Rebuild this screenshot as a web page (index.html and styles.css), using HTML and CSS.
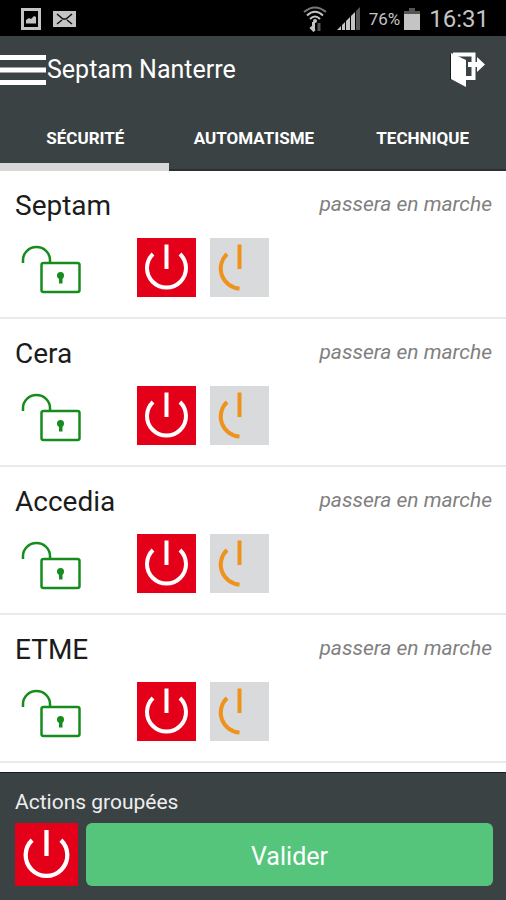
FILE: index.html
```html
<!DOCTYPE html>
<html lang="fr">
<head>
<meta charset="utf-8">
<meta name="viewport" content="width=device-width, initial-scale=1">
<title>Septam Nanterre</title>
<link rel="stylesheet" href="styles.css">
</head>
<body>
<svg class="sprite" aria-hidden="true">
  <symbol id="unlock" viewBox="0 0 60 50">
    <path d="M2 18V15A13.500 13 0 0 1 29 15V17" fill="none" stroke="currentColor" stroke-width="2.500"/>
    <rect x="20.500" y="18" width="38" height="29" rx="2" fill="none" stroke="currentColor" stroke-width="2.500"/>
    <circle cx="39.500" cy="30.500" r="3.500" fill="currentColor"/>
    <path d="M38 31h3.500v7.500H38z" fill="currentColor"/>
  </symbol>
  <symbol id="power" viewBox="0 0 59 59">
    <path d="M29.500 6.500V31M16 16A19.500 19.500 0 1 0 43 16" fill="none" stroke="currentColor" stroke-width="4"/>
  </symbol>
  <symbol id="half-power" viewBox="0 0 59 59">
    <path d="M29.500 6.500V31M17 16A20 20 0 0 0 29.500 50.500" fill="none" stroke="currentColor" stroke-width="4"/>
  </symbol>
</svg>
<div class="app">
  <div class="status">
    <svg width="20" height="22" viewBox="0 0 20 22" aria-hidden="true">
      <rect x="1.500" y="1.500" width="17" height="19" fill="none" stroke="#c4c4c4" stroke-width="3"/>
      <path d="M5 15.500V12l3-2 2 1 3-3 2 1v6.500z" fill="#c4c4c4"/>
    </svg>
    <svg width="23" height="22" viewBox="0 0 23 22" aria-hidden="true">
      <path d="M0 3h23v16H0z" fill="#c4c4c4"/>
      <path d="M4 6l6 5h3l6-5M4 16l5-4M19 16l-5-4" fill="none" stroke="#111" stroke-width="1.500"/>
    </svg>
    <div class="system">
      <svg width="24" height="26" viewBox="0 0 24 26" fill="none" stroke="#c4c4c4" stroke-width="2" aria-hidden="true">
        <path d="M1 6Q12-3 23 6" stroke="#777"/>
        <path d="M4 9.500Q12 2 20 9.500M7 13Q12 8 17 13"/>
        <circle cx="12" cy="15" r="2" fill="#c4c4c4" stroke="none"/>
        <path d="M10.500 16v8M7.500 21l3 3 1-1" stroke-width="3"/>
        <path d="M16 25v-8" stroke="#555" stroke-width="3"/>
      </svg>
      <svg width="24" height="24" viewBox="0 0 24 24" aria-hidden="true">
        <path d="M0 23l4-4v4zM5 18l3-3v8H5zM9 14l4-4v13H9zM14 9l4-4v18h-4z" fill="#c4c4c4"/>
        <path d="M19 4l4-4v23h-4z" fill="#555"/>
      </svg>
      <span class="percent">76%</span>
      <svg width="16" height="22" viewBox="0 0 16 22" aria-hidden="true">
        <path d="M5 0h6v3h5v4H0V3h5z" fill="#555"/>
        <path d="M0 6h16v16H0z" fill="#c4c4c4"/>
      </svg>
      <time class="clock">16:31</time>
    </div>
  </div>
  <header class="bar">
    <button class="menu" aria-label="Menu">
      <svg width="46" height="32" viewBox="0 0 46 32"><path d="M0 3.500h46M0 16h46M0 28.500h46" stroke="#fff" stroke-width="5"/></svg>
    </button>
    <h1>Septam Nanterre</h1>
    <button class="exit" aria-label="Se déconnecter">
      <svg width="36" height="36" viewBox="0 0 36 36">
        <path d="M0 2v26" stroke="#151a1c" stroke-width="2"/>
        <path d="M3 2.500h20.500V26H16" fill="none" stroke="#fff" stroke-width="4"/>
        <path d="M1 1l15 7v27L1 27z" fill="#fff"/>
        <path d="M18 10h8V3l10 9-10 9v-6h-8z" fill="#3a4244"/>
        <path d="M18 10h9V5l8 7.500-8 7.500v-5h-9z" fill="#fff"/>
      </svg>
    </button>
  </header>
  <nav class="tabs">
    <a class="tab active" href="#securite" aria-current="page">SÉCURITÉ</a>
    <a class="tab" href="#automatisme">AUTOMATISME</a>
    <a class="tab" href="#technique">TECHNIQUE</a>
  </nav>
  <main class="list" id="securite">
    <section class="site">
      <div class="heading"><h2>Septam</h2><em>passera en marche</em></div>
      <div class="actions">
        <svg class="lock" role="img" aria-label="Déverrouillé"><use href="#unlock"/></svg>
        <button class="toggle total" aria-label="Marche totale"><svg><use href="#power"/></svg></button>
        <button class="toggle partial" aria-label="Marche partielle"><svg><use href="#half-power"/></svg></button>
      </div>
    </section>
    <section class="site">
      <div class="heading"><h2>Cera</h2><em>passera en marche</em></div>
      <div class="actions">
        <svg class="lock" role="img" aria-label="Déverrouillé"><use href="#unlock"/></svg>
        <button class="toggle total" aria-label="Marche totale"><svg><use href="#power"/></svg></button>
        <button class="toggle partial" aria-label="Marche partielle"><svg><use href="#half-power"/></svg></button>
      </div>
    </section>
    <section class="site">
      <div class="heading"><h2>Accedia</h2><em>passera en marche</em></div>
      <div class="actions">
        <svg class="lock" role="img" aria-label="Déverrouillé"><use href="#unlock"/></svg>
        <button class="toggle total" aria-label="Marche totale"><svg><use href="#power"/></svg></button>
        <button class="toggle partial" aria-label="Marche partielle"><svg><use href="#half-power"/></svg></button>
      </div>
    </section>
    <section class="site">
      <div class="heading"><h2>ETME</h2><em>passera en marche</em></div>
      <div class="actions">
        <svg class="lock" role="img" aria-label="Déverrouillé"><use href="#unlock"/></svg>
        <button class="toggle total" aria-label="Marche totale"><svg><use href="#power"/></svg></button>
        <button class="toggle partial" aria-label="Marche partielle"><svg><use href="#half-power"/></svg></button>
      </div>
    </section>
  </main>
  <footer class="group">
    <p>Actions groupées</p>
    <div class="group-actions">
      <button class="toggle total large" aria-label="Marche totale groupée"><svg><use href="#power"/></svg></button>
      <button class="submit">Valider</button>
    </div>
  </footer>
</div>
</body>
</html>
```
FILE: styles.css
```css
* {
  box-sizing: border-box;
}

body {
  margin: 0;
  background: #fff;
  color: #1c1c1c;
  font-family: Roboto, "Liberation Sans", sans-serif;
}

button {
  padding: 0;
  border: 0;
  background: none;
  color: inherit;
  font: inherit;
}

h1, h2, p {
  margin: 0;
  font-weight: 400;
}

svg {
  display: block;
  flex: none;
}

.sprite {
  position: absolute;
  width: 0;
  height: 0;
}

.app {
  display: flex;
  flex-direction: column;
  min-height: 100vh;
}

.status {
  display: flex;
  align-items: center;
  gap: 12px;
  height: 36px;
  padding: 2px 17px 0 21px;
  background: #000;
  color: #c4c4c4;
}

.system {
  display: flex;
  align-items: center;
  gap: 4px;
  margin-left: auto;
}

.system svg:first-child {
  margin-right: 6px;
}

.percent {
  margin-left: 4px;
  font-size: 17px;
}

.clock {
  margin-left: 5px;
  font-size: 24px;
  line-height: 32px;
}

.bar {
  display: flex;
  align-items: center;
  height: 68px;
  padding-right: 20px;
  background: #3a4244;
  color: #fff;
}

.bar h1 {
  flex: 1;
  padding-left: 1px;
  font-size: 25px;
  line-height: 32px;
}

.tabs {
  display: grid;
  grid-template-columns: repeat(3, 1fr);
  height: 67px;
  background: #3a4244;
}

.tab {
  display: flex;
  align-items: center;
  justify-content: center;
  padding: 8px 0 6px 2px;
  border-bottom: 2px solid #2b3032;
  color: #fff;
  font-size: 17px;
  font-weight: 700;
  line-height: 24px;
  text-decoration: none;
}

.tab.active {
  padding-bottom: 0;
  border-bottom: 8px solid #d8d8d8;
}

.list {
  flex: 1;
}

.site {
  padding: 16px 14px 20px 15px;
  border-bottom: 2px solid #eaeaea;
}

.heading {
  display: flex;
  align-items: center;
  justify-content: space-between;
  height: 36px;
}

.heading h2 {
  font-size: 28px;
}

.heading em {
  color: #808080;
  font-size: 21px;
  line-height: 24px;
  padding-bottom: 2px;
}

.actions {
  display: flex;
  align-items: flex-end;
  gap: 14px;
  margin-top: 15px;
  padding-left: 6px;
}

.lock {
  width: 60px;
  height: 50px;
  margin: 0 42px 2px 0;
  color: #168c1c;
}

.toggle {
  flex: none;
  width: 59px;
  height: 59px;
}

.toggle svg {
  width: 100%;
  height: 100%;
}

.total {
  background: #e50019;
  color: #fff;
}

.partial {
  background: #d8dadb;
  color: #ee921c;
}

.group {
  padding: 14px 13px 14px 15px;
  border-top: 1px solid #142029;
  background: #3a4244;
  color: #fff;
}

.group p {
  color: #eee;
  font-size: 21px;
  line-height: 30px;
}

.group-actions {
  display: flex;
  gap: 8px;
  margin-top: 6px;
}

.large {
  width: 63px;
  height: 63px;
}

.submit {
  flex: 1;
  padding-top: 3px;
  border-radius: 6px;
  background: #56c57c;
  font-size: 25px;
}
```
